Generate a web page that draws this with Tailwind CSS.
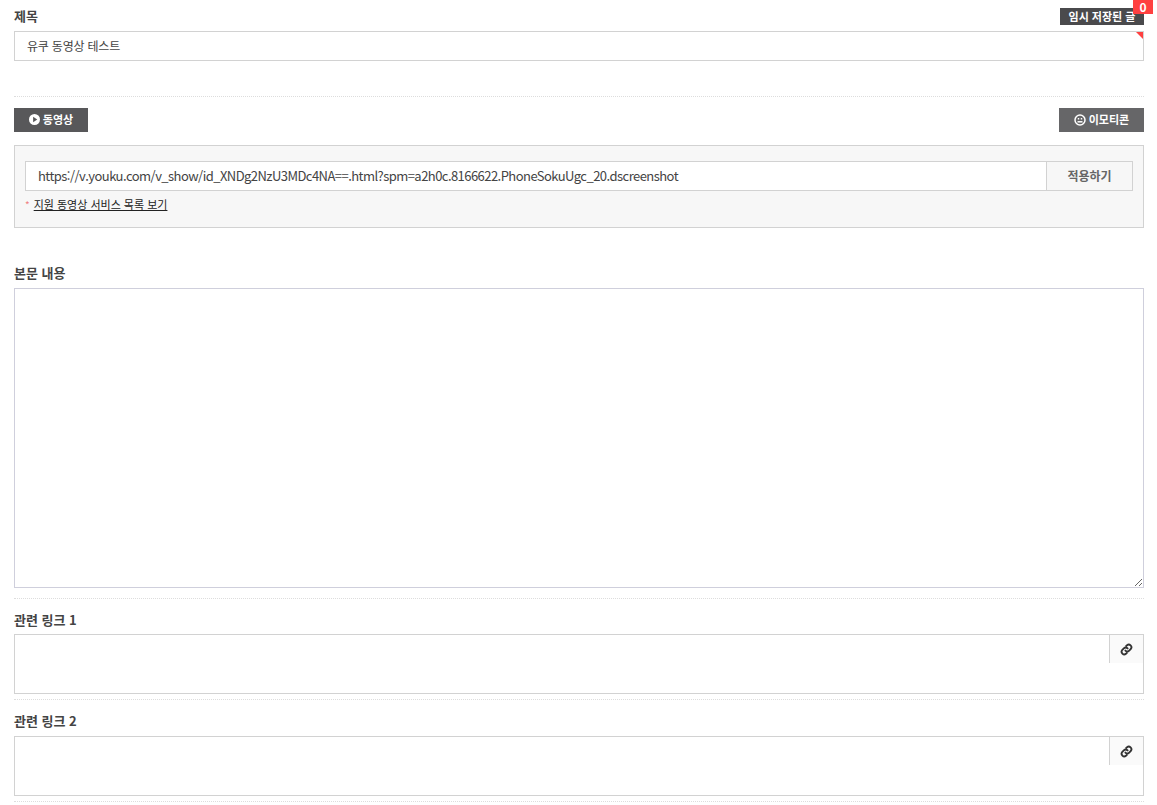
<!DOCTYPE html>
<html lang="ko">
  <head>
    <meta charset="UTF-8" />
    <meta name="viewport" content="width=device-width, initial-scale=1.0" />
    <script src="https://cdn.jsdelivr.net/npm/@tailwindcss/browser@4"></script>
    <title>글쓰기</title>
  </head>

  <body class="bg-white h-[805px] overflow-hidden font-['Noto_Sans_CJK_KR',sans-serif] text-[#333]">
    <div class="w-[1130px] ml-[14px]">
      <!-- 제목 -->
      <div class="flex justify-between items-end h-[31px] pb-[6px]">
        <span class="text-[13px] leading-[18px] font-bold text-[#444]">제목</span>
        <a class="relative flex items-center justify-center w-[84px] h-[17px] bg-[#4a4a4c] text-white text-[11px] font-bold">
          임시 저장된 글
          <span class="absolute -top-[8px] -right-[9px] w-[20px] h-[14px] bg-[#ff4040] text-[12px] leading-[13px] text-center">0</span>
        </a>
      </div>
      <div class="relative h-[30px] border border-[#d2d2d2] pl-3 text-[12px] tracking-[-0.2px] leading-[28px] text-[#444]">
        유쿠 동영상 테스트
        <span class="absolute top-0 right-0 w-0 h-0 border-t-[7px] border-l-[7px] border-t-[#ff4040] border-l-transparent"></span>
      </div>

      <div class="mt-[35px] border-t border-dotted border-[#dddddd]"></div>

      <!-- 동영상 / 이모티콘 -->
      <div class="flex justify-between mt-[11px]">
        <button class="flex items-center justify-center gap-[3px] w-[74px] h-[24px] pb-px bg-[#58585a] text-white text-[11px] font-bold">
          <svg class="w-[11px] h-[11px]" viewBox="0 0 12 12"><circle cx="6" cy="6" r="6" fill="#fff"/><path d="M4.500 3l4.500 3-4.500 3z" fill="#58585a"/></svg>
          동영상
        </button>
        <button class="flex items-center justify-center gap-[3px] w-[85px] h-[24px] pb-px bg-[#666668] text-white text-[11px] font-bold">
          <svg class="w-[12px] h-[12px]" viewBox="0 0 12 12" fill="none" stroke="#fff" stroke-width="1.500"><circle cx="6" cy="6" r="5"/><path d="M3.500 7.800h5" /><path d="M3.800 4.800h1.400M6.800 4.800h1.400"/></svg>
          이모티콘
        </button>
      </div>

      <div class="mt-[13px] h-[83px] bg-[#f7f7f7] border border-[#d2d2d2] pt-[15px] px-[10px]">
        <div class="flex h-[30px] border border-[#d2d2d2] bg-white">
          <div class="flex-1 pl-3 text-[13px] tracking-[-0.55px] leading-[28px] text-[#444]">https://v.youku.com/v_show/id_XNDg2NzU3MDc4NA==.html?spm=a2h0c.8166622.PhoneSokuUgc_20.dscreenshot</div>
          <button class="w-[86px] bg-[#f7f7f7] border-l border-[#d2d2d2] text-[12px] font-bold text-[#666]">적용하기</button>
        </div>
        <p class="mt-[5px] text-[11px] leading-[16px]"><span class="text-[#f08080] mr-[4px] text-[10px]">*</span><a class="underline text-[#222]">지원 동영상 서비스 목록 보기</a></p>
      </div>

      <!-- 본문 -->
      <div class="mt-[36px] text-[13px] leading-[18px] font-bold text-[#444]">본문 내용</div>
      <textarea class="block w-full h-[300px] mt-[6px] border border-[#cfcfdc] bg-white resize-y"></textarea>
      <div class="mt-[10px] border-t border-dotted border-[#dddddd]"></div>

      <!-- 관련 링크 -->
      <div class="mt-[12px] text-[13px] leading-[18px] font-bold text-[#444]">관련 링크 1</div>
      <div class="relative h-[60px] mt-[5px] border border-[#d2d2d2]">
        <span class="absolute top-0 right-0 flex items-center justify-center w-[34px] h-[28px] bg-[#fafafa] border-l border-[#d2d2d2]">
          <svg class="w-[13px] h-[13px]" viewBox="0 0 24 24" fill="none" stroke="#333" stroke-width="3.500" stroke-linecap="round"><path d="M10 14a5 5 0 0 0 7 0l3-3a5 5 0 0 0-7-7l-1.500 1.500"/><path d="M14 10a5 5 0 0 0-7 0l-3 3a5 5 0 0 0 7 7l1.500-1.500"/></svg>
        </span>
      </div>
      <div class="mt-[5px] border-t border-dotted border-[#dddddd]"></div>

      <div class="mt-[12px] text-[13px] leading-[18px] font-bold text-[#444]">관련 링크 2</div>
      <div class="relative h-[60px] mt-[6px] border border-[#d2d2d2]">
        <span class="absolute top-0 right-0 flex items-center justify-center w-[34px] h-[28px] bg-[#fafafa] border-l border-[#d2d2d2]">
          <svg class="w-[13px] h-[13px]" viewBox="0 0 24 24" fill="none" stroke="#333" stroke-width="3.500" stroke-linecap="round"><path d="M10 14a5 5 0 0 0 7 0l3-3a5 5 0 0 0-7-7l-1.500 1.500"/><path d="M14 10a5 5 0 0 0-7 0l-3 3a5 5 0 0 0 7 7l1.500-1.500"/></svg>
        </span>
      </div>
      <div class="mt-[5px] border-t border-dotted border-[#dddddd]"></div>
    </div>
  </body>
</html>
